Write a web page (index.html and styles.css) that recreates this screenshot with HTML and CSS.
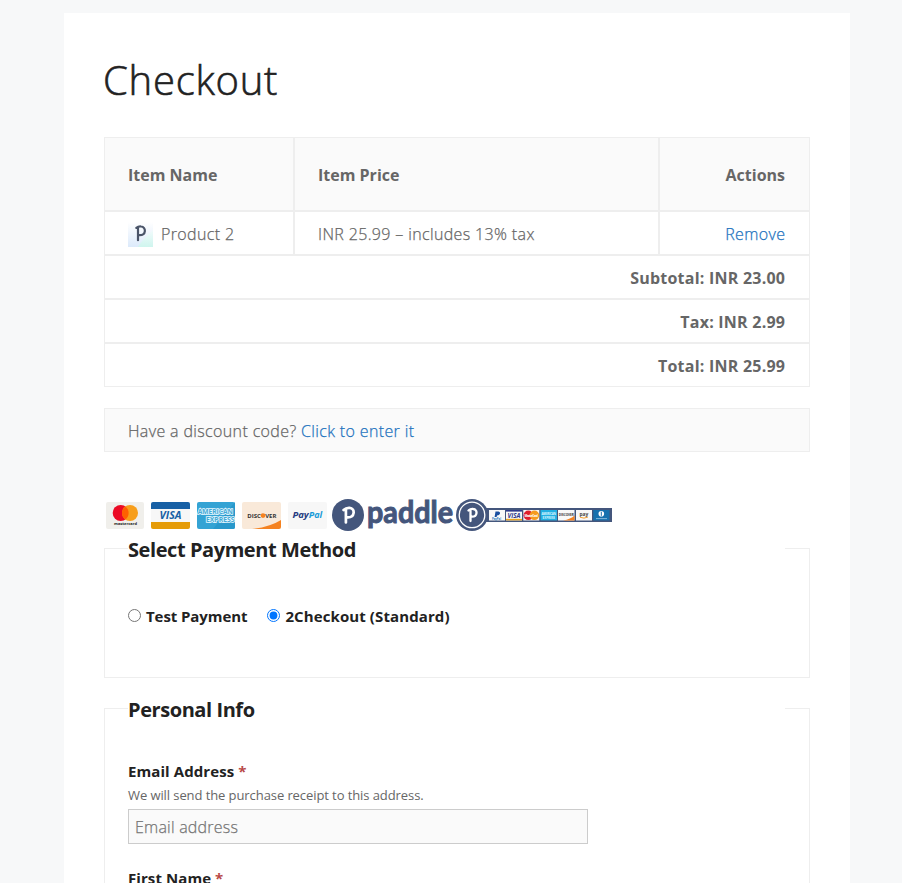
FILE: index.html
```html
<!DOCTYPE html>
<html lang="en">
<head>
<meta charset="utf-8">
<title>Checkout</title>
<link rel="stylesheet" href="styles.css">
</head>
<body>
<main class="page">
  <h1 class="title">Checkout</h1>

  <table class="cart">
    <colgroup><col class="col-name"><col class="col-price"><col class="col-actions"></colgroup>
    <thead>
      <tr><th>Item Name</th><th>Item Price</th><th class="right">Actions</th></tr>
    </thead>
    <tbody>
      <tr>
        <td>
          <div class="product">
            <svg class="thumb" width="25" height="25" viewBox="0 0 25 25">
              <defs><linearGradient id="tg" x1="0" y1="0" x2="0" y2="1"><stop offset="0" stop-color="#fff"/><stop offset="1" stop-color="#dceafb"/></linearGradient><linearGradient id="tm" x1="0" y1="0" x2="0" y2="1"><stop offset="0" stop-color="#f2fbfc"/><stop offset="1" stop-color="#cff5ee"/></linearGradient></defs>
              <rect width="25" height="25" fill="url(#tg)"/>
              <path d="M25 8v17H10Q13 19 25 8z" fill="url(#tm)"/>
              <path d="M10 18.2V5.5M8.3 5.8Q10.5 4.2 13 4.5C18.5 5 18.3 13.2 11.5 13.2" fill="none" stroke="#4a5468" stroke-width="2.2" stroke-linecap="round"/>
            </svg>
            <span>Product 2</span>
          </div>
        </td>
        <td>INR 25.99 – includes 13% tax</td>
        <td class="right"><a class="last" href="#">Remove</a></td>
      </tr>
    </tbody>
    <tfoot>
      <tr><th colspan="3"><span class="sum">Subtotal: INR 23.00</span></th></tr>
      <tr><th colspan="3"><span class="sum">Tax: INR 2.99</span></th></tr>
      <tr><th colspan="3"><span class="sum">Total: INR 25.99</span></th></tr>
    </tfoot>
  </table>

  <p class="discount">Have a discount code? <a href="#">Click to enter it</a></p>

  <div class="icons">
    <svg class="card" width="39" height="28" viewBox="0 0 39 28">
      <rect width="38" height="27" rx="2" fill="#f0efeb"/>
      <circle cx="14.7" cy="11" r="8" fill="#eb0a24"/><circle cx="24" cy="11" r="8" fill="#f79e1b"/>
      <path d="M19.3 4.5a8 8 0 0 1 0 13a8 8 0 0 1 0-13z" fill="#ff5f00"/>
      <text x="8" y="22.6" class="logo-b" font-size="4.2" textLength="23" lengthAdjust="spacingAndGlyphs" fill="#222">mastercard</text>
    </svg>
    <svg class="card" width="39" height="28" viewBox="0 0 39 28">
      <path d="M0 7V2Q0 0 2 0H37Q39 0 39 2V7z" fill="#1760a5"/><path d="M0 7h39v13H0z" fill="#f7f7f7"/><path d="M0 20h39v5q0 2-2 2H2q-2 0-2-2z" fill="#e59b07"/>
      <text x="8.5" y="17.2" class="logo-b ital" font-size="10.5" textLength="22" lengthAdjust="spacingAndGlyphs" fill="#1760a5">VISA</text>
    </svg>
    <svg class="card" width="39" height="28" viewBox="0 0 39 28">
      <rect width="38" height="27" rx="2" fill="#34a3d4"/><path d="M38 0v25q0 2-2 2H16z" fill="#2898cb"/>
      <g class="logo-b" font-size="7" fill="#43a9d6" stroke="#e8f8ff" stroke-width="1.5" paint-order="stroke">
        <text x=".8" y="12.2" textLength="35" lengthAdjust="spacingAndGlyphs">AMERICAN</text><text x="9" y="20.2" textLength="28.5" lengthAdjust="spacingAndGlyphs">EXPRESS</text>
      </g>
    </svg>
    <svg class="card" width="39" height="28" viewBox="0 0 39 28">
      <rect width="39" height="27" rx="2" fill="#f9e9d9"/><path d="M39 18v7q0 2-2 2H10Q28 25 39 18z" fill="#f58220"/>
      <g class="logo-b" font-size="6" fill="#333"><text x="5.2" y="15.8" textLength="13.6" lengthAdjust="spacingAndGlyphs">DISC</text><text x="23.2" y="15.8" textLength="11.2" lengthAdjust="spacingAndGlyphs">VER</text></g><circle cx="21" cy="13.6" r="2.4" fill="#f58220"/>
    </svg>
    <svg class="card" width="39" height="28" viewBox="0 0 39 28">
      <rect width="39" height="27" rx="2" fill="#f7f7f7"/>
      <g class="logo-b ital" font-size="8.6"><text x="4.4" y="16.4" textLength="16.4" lengthAdjust="spacingAndGlyphs" fill="#253b80">Pay</text><text x="20.8" y="16.4" textLength="13.5" lengthAdjust="spacingAndGlyphs" fill="#179bd7">Pal</text></g>
    </svg>
    <svg class="paddle" width="282" height="40" viewBox="332 498 282 40">
      <circle cx="348" cy="514.9" r="16" fill="#44567c"/>
      <path d="M345.9 522.5V509M343.6 510Q346 507.6 349.5 507.8C355.6 508.3 355 517.6 347.6 517.4" fill="none" stroke="#fff" stroke-width="2.7" stroke-linecap="round"/>
      <text x="367" y="523" class="word" font-size="31" textLength="86" lengthAdjust="spacingAndGlyphs" fill="#44567c" stroke="#44567c" stroke-width="1">paddle</text>
      <path d="M484 508h128v14H484z" fill="#44567c"/>
      <circle cx="472" cy="514.9" r="16" fill="#44567c"/><circle cx="472" cy="514.9" r="12.8" fill="none" stroke="#fff" stroke-width="1.3"/>
      <path d="M470.5 521V509.8M468.5 510.5Q470.5 508.7 473.2 509C478 509.4 477.6 516.9 471.8 516.7" fill="none" stroke="#fff" stroke-width="2.3" stroke-linecap="round"/>
      <path d="M489 510h16v10.4h-16zM506 510h16v10.4h-16zM523.3 510h16v10.4h-16zM558 510h16.5v10.4H558zM576 510h16v10.4h-16z" fill="#f8f8f8"/>
      <path d="M540.5 510h16.5v10.4h-16.5z" fill="#23b0e2"/><path d="M593.3 510h16.2v10.4h-16.2z" fill="#1571ae"/>
      <path d="M495.5 511.5h3q2 .2 1.5 2.3-.6 1.6-3 1.6l-.4 1.6h-2z" fill="#1a4fa0"/><path d="M506 510h16v1.6h-16z" fill="#303b8d"/><path d="M506 518.8h16v1.6h-16z" fill="#e9a320"/>
      <circle cx="528.3" cy="515.3" r="4.8" fill="#e01f2d"/><circle cx="534.4" cy="515.3" r="4.8" fill="#f59b20"/>
      <path d="M574.5 515.5v4.9H563q8-1.2 11.5-4.9z" fill="#f58220"/><path d="M580 517.2q4 2 8-.2" fill="none" stroke="#f5a030"/>
      <circle cx="601.3" cy="513.8" r="2.8" fill="#fff"/><path d="M601.3 511.7v4.2" stroke="#1571ae"/><path d="M596 518.6h11" stroke="#9cc7e4" stroke-width=".8"/>
      <g class="logo-b">
        <text x="492" y="519.6" font-size="2.8" textLength="9" fill="#2878bd">PayPal</text>
        <text x="507.5" y="517.8" class="ital" font-size="6.2" textLength="13" lengthAdjust="spacingAndGlyphs" fill="#303b8d">VISA</text>
        <text x="524.5" y="516.5" font-size="3" textLength="13.5" fill="#fff">MasterCard</text>
        <text x="541.5" y="514.5" font-size="3" textLength="14.5" fill="#d8f5ff">AMERICAN</text><text x="542.5" y="518.7" font-size="3" textLength="12.5" fill="#d8f5ff">EXPRESS</text>
        <text x="558.8" y="516.2" font-size="3.8" textLength="15" lengthAdjust="spacingAndGlyphs" fill="#333">DISCOVER</text>
        <text x="579.5" y="515.8" font-size="5.6" textLength="8.8" lengthAdjust="spacingAndGlyphs" fill="#444">pay</text>
      </g>
    </svg>
  </div>

  <fieldset class="box payment">
    <legend>Select Payment Method</legend>
    <div class="radios">
      <label><input type="radio" name="gateway"><span class="test">Test Payment</span></label>
      <label><input type="radio" name="gateway" checked><span class="standard">2Checkout (Standard)</span></label>
    </div>
  </fieldset>

  <fieldset class="box personal">
    <legend>Personal Info</legend>
    <div class="field">
      <label class="label" for="email">Email Address <span class="req">*</span></label>
      <span class="hint">We will send the purchase receipt to this address.</span>
      <input class="input" id="email" type="email" placeholder="Email address">
    </div>
    <div class="field">
      <label class="label">First Name <span class="req">*</span></label>
    </div>
  </fieldset>
</main>
</body>
</html>
```

FILE: styles.css
```css
* { box-sizing: border-box; }
html { height: 100%; overflow: hidden; }
body {
  margin: 0;
  height: 100%;
  overflow: hidden;
  background: #f7f8f9;
  color: #666;
  font: 300 16px/24px "Open Sans", "Noto Sans", sans-serif;
}
a { color: #1e73be; text-decoration: none; }
.page {
  width: 786px;
  margin: 13px 0 0 64px;
  padding: 40px;
  background: #fff;
}
.title {
  margin: 0 0 0 -1px;
  height: 84px;
  font-size: 40px;
  font-weight: 300;
  line-height: 54px;
  letter-spacing: .75px;
  -webkit-text-stroke: .6px currentColor;
  color: #222;
}
.cart {
  width: 706px;
  table-layout: fixed;
  border-collapse: separate;
  border-spacing: 0;
}
.col-name { width: 190px; }
.col-price { width: 365px; }
.col-actions { width: 151px; }
.cart th, .cart td {
  height: 44px;
  padding: 2px 24px 0 23px;
  border: 1px solid #eee;
  text-align: left;
  vertical-align: middle;
  white-space: nowrap;
}
.cart td, .discount {
  letter-spacing: .36px;
  -webkit-text-stroke: .25px currentColor;
}
.cart th { font-weight: 700; }
.cart thead th { height: 74px; background: #fafafa; }
.cart tfoot th, .cart .right { text-align: right; }
.sum { letter-spacing: .23px; margin-right: -.23px; }
.last { margin-right: -.36px; }
.product { display: flex; align-items: center; gap: 8px; }
.discount {
  margin: 21px 0 0;
  height: 44px;
  padding: 1px 23px;
  line-height: 42px;
  border: 1px solid #eee;
  background: #fafafa;
}
.icons {
  display: flex;
  align-items: flex-start;
  gap: 6.5px;
  height: 34px;
  margin: 46px 0 0 1.6px;
}
.icons svg { flex: none; }
.card { margin-top: 4px; }
.paddle { margin-left: -1.4px; }
.logo-b { font-family: "Open Sans", sans-serif; font-weight: 700; }
.ital { font-style: italic; }
.word { font-family: "Lato", sans-serif; font-weight: 700; }
.box {
  margin: 0;
  padding: 0 24px 0 23px;
  border: 1px solid #eee;
  min-width: 0;
}
.box legend {
  width: 100%;
  height: 29px;
  padding: 1px 0 0;
  font-size: 20px;
  font-weight: 700;
  line-height: 29px;
  letter-spacing: -.43px;
  color: #222;
}
.payment { height: 144px; margin-top: 2px; }
.personal { margin-top: 16px; height: 220px; border-bottom: 0; }
.radios {
  display: flex;
  gap: 20px;
  margin-top: 41px;
  font-size: 15px;
  font-weight: 700;
  color: #222;
}
.radios label { display: flex; align-items: center; gap: 5px; }
.radios input { width: 13px; height: 13px; margin: -2px 0 0; }
.test { letter-spacing: -.08px; }
.standard { letter-spacing: .1px; }
.field { margin-top: 36px; }
.field + .field { margin-top: 22px; }
.label { display: block; font-size: 15px; font-weight: 700; line-height: 24px; letter-spacing: .08px; color: #222; }
.req { color: #b94a48; }
.hint { display: block; font-size: 13px; font-weight: 400; line-height: 24px; letter-spacing: -.085px; }
.input {
  display: block;
  width: 460px;
  height: 35px;
  margin-top: 2px;
  padding: 0 6px;
  border: 1px solid #ccc;
  border-radius: 0;
  background: #fafafa;
  font: 300 16px "Open Sans", sans-serif;
  letter-spacing: .22px;
  -webkit-text-stroke: .25px currentColor;
  color: #666;
}
```
